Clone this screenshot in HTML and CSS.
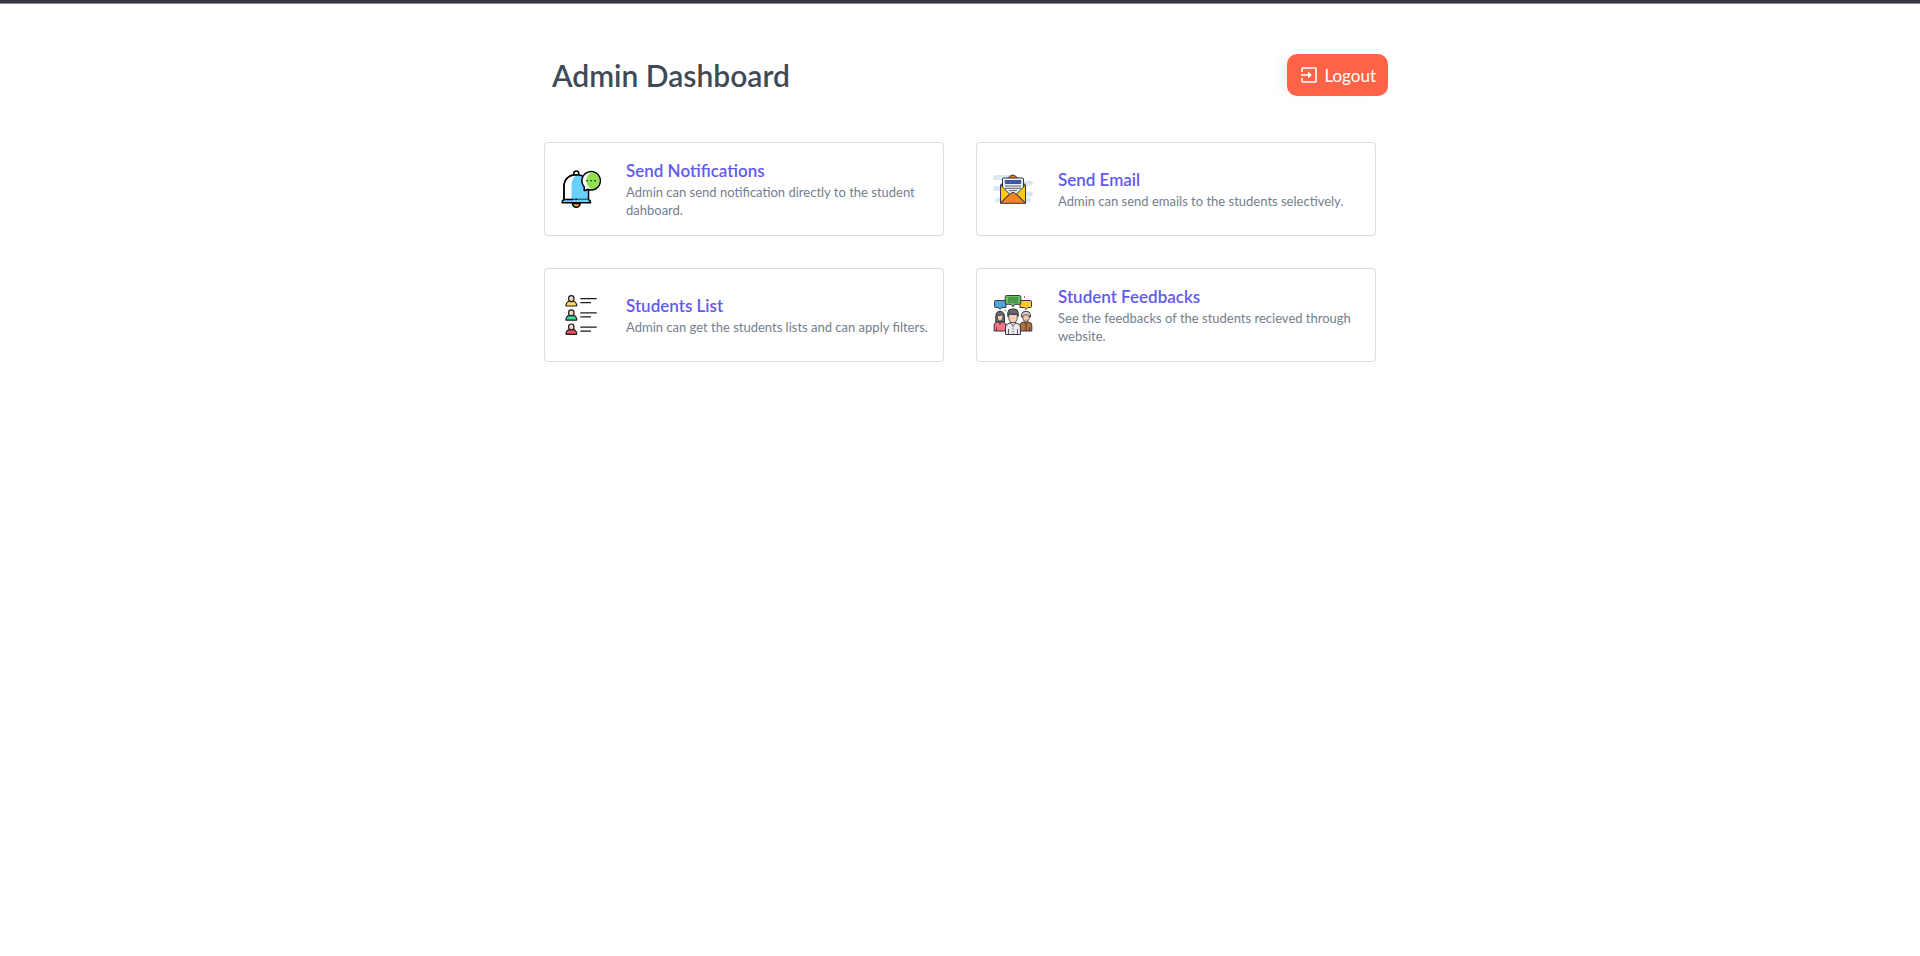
FILE: index.html
```html
<!DOCTYPE html>
<html lang="en">
<head>
<meta charset="utf-8">
<meta name="viewport" content="width=device-width, initial-scale=1">
<title>Admin Dashboard</title>
<link rel="stylesheet" href="styles.css">
</head>
<body>
<main class="page">
  <header class="header">
    <h1 class="title">Admin Dashboard</h1>
    <button class="logout" type="button">
      <svg class="logout-icon" viewBox="0 0 16 16" fill="none" stroke="#fff" stroke-width="1.6" stroke-linejoin="round" aria-hidden="true">
        <path d="M1 5V1.8Q1 1 1.8 1H14.2Q15 1 15 1.8V14.2Q15 15 14.2 15H1.8Q1 15 1 14.2V11M0 8H9"/>
        <path d="M7 4.6L10.8 8L7 11.4Z" fill="#fff" stroke="none"/>
      </svg>
      <span>Logout</span>
    </button>
  </header>
  <nav class="cards" aria-label="Admin actions">
    <a class="card" href="#notifications">
      <svg class="card-icon" viewBox="0 0 40 40" stroke="#000" stroke-width="1.5" stroke-linejoin="round" stroke-linecap="round" aria-hidden="true">
        <path d="M11.5 34.5a3.8 3.8 0 0 0 7.6 0z" fill="#ff9f3d"/>
        <circle cx="15.3" cy="4.6" r="2.5" fill="#fff"/>
        <path d="M3 30.5V17.5C3 10 8.3 5.8 15.3 5.8S27.5 10 27.5 17.5V30.5z" fill="#69d0ff"/>
        <path d="M3.8 30V17.5C3.8 10.5 8 7 15 6.5C11.5 9 10.5 13 10.5 18V30z" fill="#fff" stroke="none"/>
        <path d="M3 30.5V17.5C3 10 8.3 5.8 15.3 5.8" fill="none"/>
        <path d="M3 30.5Q1 31.5 1 33.8H29.6Q29.6 31.5 27.5 30.5" fill="#69d0ff"/>
        <path d="M3.5 30.5H11.5M15 30.5H15.3" fill="none"/>
        <path d="M23.2 21.6V17.8A9.2 9.2 0 1 1 26.5 20.2Q25.5 21.6 23.2 21.6z" fill="#fff"/>
        <path d="M31 3.3A8.5 8.5 0 0 1 31 20.1C27.8 19 25.3 15.5 25.3 11.7S27.8 4.4 31 3.3z" fill="#90e050" stroke="none"/>
        <path d="M26 11.8h.1M30 11.8h.1M34 11.8h.1" fill="none"/>
      </svg>
      <span class="card-text">
        <span class="card-title">Send Notifications</span>
        <span class="card-desc">Admin can send notification directly to the student dahboard.</span>
      </span>
    </a>
    <a class="card" href="#email">
      <svg class="card-icon" viewBox="0 0 40 40" stroke="#303744" stroke-width="1" stroke-linejoin="round" aria-hidden="true">
        <path d="M2.5 8.5H20M12 14.3H37.5M2.5 19.5H20M15 25H37.5M4.5 31H35.5" fill="none" stroke="#dbe8f3" stroke-width="5" stroke-linecap="round"/>
        <path d="M7.5 16L17.5 6.8Q19.7 5 22 6.8L32.5 16z" fill="#e87818"/>
        <path d="M9.5 24V10Q9.5 9 10.5 9H29.5Q30.5 9 30.5 10V24L20 32z" fill="#eaf2f8"/>
        <path d="M12.2 11.5H27.8V14.5H12.2z" fill="#3d5ab8" stroke="#2f3f8c" stroke-width=".8"/>
        <path d="M12 17H28M12 19.3H28M16 21.6H24" fill="none" stroke-width=".8"/>
        <path d="M7.5 16L16.5 25L7.5 34zM32.5 16L23.5 25L32.5 34z" fill="#ffc814"/>
        <path d="M7.5 34.3L18 24.2Q20 22.5 22 24.2L32.5 34.3z" fill="#f78422"/>
      </svg>
      <span class="card-text">
        <span class="card-title">Send Email</span>
        <span class="card-desc">Admin can send emails to the students selectively.</span>
      </span>
    </a>
    <a class="card" href="#students">
      <svg class="card-icon" viewBox="0 0 40 40" stroke="#1c1c20" stroke-width="1.2" stroke-linejoin="round" aria-hidden="true">
        <g>
          <path d="M5.5 11Q4.8 11 5 9.8C5.5 7.3 7.5 6 10.3 6S15.2 7.3 15.7 9.8Q15.8 11 15.2 11z" fill="#ffd65a"/>
          <path d="M7.6 3.300a2.700 2.700 0 0 1 5.400 0v.7Q12.800 6.600 10.300 6.600T7.600 4z" fill="#f6d5c8"/>
          <path d="M19.3 3.7H35.7M19.3 7.7H30" fill="none"/>
        </g>
        <g transform="translate(0 14.2)">
          <path d="M5.5 11Q4.8 11 5 9.8C5.5 7.3 7.5 6 10.3 6S15.2 7.3 15.7 9.8Q15.8 11 15.2 11z" fill="#3ddc97"/>
          <path d="M7.6 3.300a2.700 2.700 0 0 1 5.400 0v.7Q12.800 6.600 10.300 6.600T7.600 4z" fill="#f6d5c8"/>
          <path d="M19.3 3.7H35.7M19.3 7.7H30" fill="none"/>
        </g>
        <g transform="translate(0 28.4)">
          <path d="M5.5 11Q4.8 11 5 9.8C5.5 7.3 7.5 6 10.3 6S15.2 7.3 15.7 9.8Q15.8 11 15.2 11z" fill="#ff4a5c"/>
          <path d="M7.6 3.300a2.700 2.700 0 0 1 5.400 0v.7Q12.800 6.600 10.300 6.600T7.600 4z" fill="#f6d5c8"/>
          <path d="M19.3 3.7H35.7M19.3 7.7H30" fill="none"/>
        </g>
      </svg>
      <span class="card-text">
        <span class="card-title">Students List</span>
        <span class="card-desc">Admin can get the students lists and can apply filters.</span>
      </span>
    </a>
    <a class="card" href="#feedbacks">
      <svg class="card-icon" viewBox="0 0 40 40" stroke="#35383e" stroke-width="1" stroke-linejoin="round" aria-hidden="true">
        <path d="M2.5 5.5H13V12.5H8.5L7 14.5L5.5 12.5H2.5Q1.5 12.5 1.5 11.5V6.5Q1.5 5.5 2.5 5.5z" fill="#4da6dc"/>
        <path d="M27 5.5H37.5Q38.5 5.5 38.5 6.5V11.5Q38.5 12.5 37.5 12.5H34.5L33 14.5L31.5 12.5H27z" fill="#ffca28"/>
        <path d="M13.5 .5H26.5Q27.8 .5 27.8 1.8V8Q27.8 9.3 26.5 9.3H21.8L20 11.8L18.2 9.3H13.5Q12.2 9.3 12.2 8V1.8Q12.2 .5 13.5 .5z" fill="#5cc858"/>
        <path d="M15 3H25M15 5H25M15 7H25" fill="none" stroke-width=".7"/>
        <path d="M31.5 1v2" stroke="#f05a5a"/><path d="M8 2.5h1M35 1h1" stroke="#e8cba0"/><path d="M11.5 15.5h2" stroke="#62cc62"/>
        <path d="M2.8 27V21Q3 16.3 7 16.3T11.5 21V27z" fill="#66686d"/>
        <path d="M1.2 36V30Q1.2 27.5 4.5 27H9.5Q12.8 27.5 12.8 30V36z" fill="#fb7185"/>
        <path d="M4.5 20.5Q8 21 9.8 19.5V22.5Q9.5 26 7 26T4.5 22.5z" fill="#f9cdb4" stroke-width=".7"/>
        <path d="M5.7 26.5L7 29.5L8.5 26.5M3.5 32V36" fill="none" stroke-width=".8"/>
        <path d="M28.5 22V19.5Q29 16.3 33 16.3T37.5 19.5V22z" fill="#d5d5d5"/>
        <path d="M27.2 36V30Q27.2 27.5 30.5 27H35.5Q38.8 27.5 38.8 30V36z" fill="#b5713b"/>
        <path d="M29.8 20.5Q33 18.5 36.3 20.5V23Q36 26.5 33 26.5T29.8 23z" fill="#f0b894" stroke-width=".7"/>
        <path d="M31 23.5Q33 22 35 23.5" fill="none" stroke="#eee"/>
        <path d="M31 27L33 30L35 27M36.5 32V36M33 30V36" fill="none" stroke-width=".8"/>
        <path d="M12.5 39.5V32Q12.5 29 16 28.3L18 27.5H22L24 28.3Q27.5 29 27.5 32V39.5z" fill="#e8e9eb"/>
        <path d="M15.7 19.5H24.3V22.5Q24 27.8 20 27.8T15.7 22.5z" fill="#f9cdb4" stroke-width=".8"/>
        <path d="M14.8 21.5V17.5Q15 14 19 14H22Q25.2 14.5 25.2 18V21.5L24 19.2Q20 20 18.5 18.2L16 19.5z" fill="#66686d"/>
        <path d="M17 28L20 30.5L23 28M15.5 34V39.5M24.5 34V39.5" fill="none" stroke-width=".8"/>
        <path d="M20 31V39" fill="none" stroke-dasharray="1 1.5"/>
      </svg>
      <span class="card-text">
        <span class="card-title">Student Feedbacks</span>
        <span class="card-desc">See the feedbacks of the students recieved through website.</span>
      </span>
    </a>
  </nav>
</main>
</body>
</html>
```
FILE: styles.css
```css
* {
  box-sizing: border-box;
}

body {
  margin: 0;
  background: #fff;
  border-top: 3px solid #38363e;
  font-family: Lato, "Liberation Sans", sans-serif;
}

body::before {
  content: "";
  display: block;
  height: 1px;
  background: #8b8d8f;
}

.page {
  max-width: 864px;
  margin: 0 auto;
  padding: 50px 16px 32px;
}

.header {
  display: flex;
  align-items: center;
  justify-content: space-between;
  margin: 0 -12px 46px 8px;
}

.title {
  margin: 0;
  color: #3f4a56;
  font-size: 30px;
  font-weight: 600;
  line-height: 40px;
}

.logout {
  display: flex;
  align-items: center;
  gap: 7px;
  height: 42px;
  padding: 0 12px 0 14px;
  border: 0;
  border-radius: 10px;
  background: #ff6347;
  box-shadow: -10px 0 12px -4px rgba(0, 0, 0, 0.05);
  color: #fff;
  font-family: inherit;
  font-size: 17px;
  cursor: pointer;
}

.logout-icon {
  width: 16px;
  height: 16px;
}

.cards {
  display: grid;
  grid-template-columns: repeat(auto-fit, minmax(320px, 1fr));
  gap: 32px;
}

.card {
  display: flex;
  align-items: center;
  gap: 25px;
  min-height: 94px;
  padding: 16px 8px 16px 16px;
  border: 1px solid #dcdddf;
  border-radius: 4px;
  text-decoration: none;
}

.card-icon {
  flex: none;
  width: 40px;
  height: 40px;
}

.card-text {
  display: flex;
  flex-direction: column;
}

.card-title {
  color: #6259f3;
  font-size: 17px;
  font-weight: 600;
  line-height: 24px;
}

.card-desc {
  color: #74808c;
  font-size: 13px;
  line-height: 18px;
}
```
